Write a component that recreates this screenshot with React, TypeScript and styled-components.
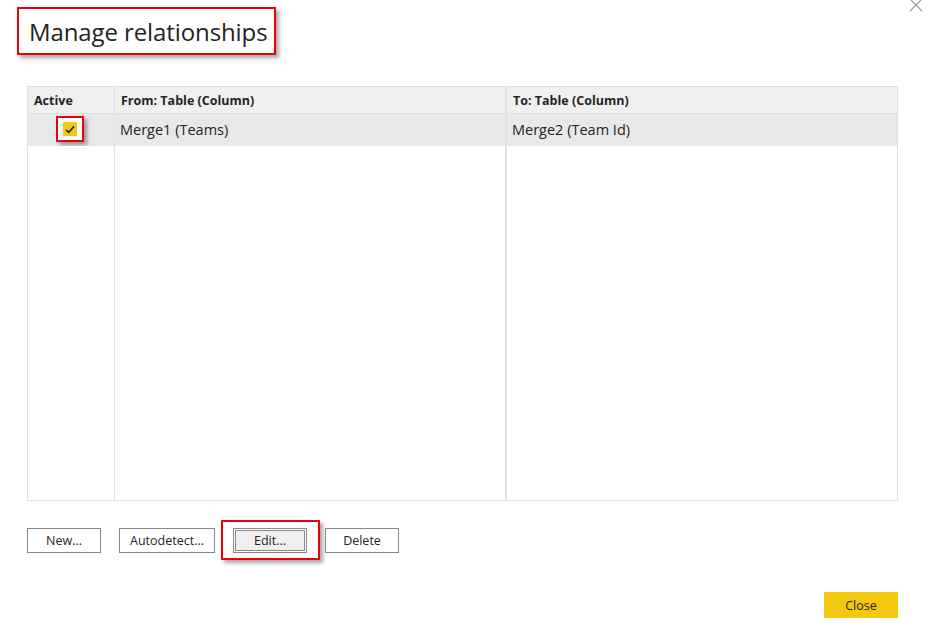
import * as React from "react";
import styled, {createGlobalStyle} from "styled-components";

interface Relationship {
    id: number;
    active: boolean;
    from: string;
    to: string;
}

const relationships: Relationship[] = [
    {id: 1, active: true, from: "Merge1 (Teams)", to: "Merge2 (Team Id)"},
];

const GlobalStyle = createGlobalStyle`
    html, body {
        margin: 0;
        padding: 0;
        background: #ffffff;
    }
    body {
        font-family: "Open Sans", "Noto Sans", "Liberation Sans", sans-serif;
        color: #252423;
    }
`;

const Dialog = styled.div`
    width: 931px;
    height: 636px;
    box-sizing: border-box;
    display: flex;
    flex-direction: column;
    overflow: hidden;
`;

const Header = styled.div`
    display: flex;
    justify-content: space-between;
    align-items: flex-start;
    padding: 7px 6px 0 17px;
`;

const Highlight = styled.div`
    display: inline-flex;
    align-items: center;
    border: 2px solid #e8000b;
    box-shadow: 3px 3px 4px rgba(0, 0, 0, 0.35);
    background: #ffffff;
`;

const TitleBox = styled(Highlight)`
    height: 44px;
    padding: 0 6px 0 10px;
`;

const Title = styled.h1`
    margin: 0;
    font-size: 24px;
    font-weight: 400;
    letter-spacing: -0.1px;
    color: #252423;
`;

const CloseX = styled.button`
    margin-top: -11px;
    width: 18px;
    height: 18px;
    padding: 0;
    border: none;
    background: transparent;
    display: flex;
    align-items: center;
    justify-content: center;
`;

const Table = styled.div`
    margin: 31px 0 0 27px;
    width: 871px;
    height: 415px;
    box-sizing: border-box;
    border: 1px solid #e1e1e1;
    display: grid;
    grid-template-columns: 86px 391px 1fr;
    grid-template-rows: 27px 32px 1fr;
`;

type Divider = "thin" | "double";

const dividerBorder = (d?: Divider) =>
    d === "double" ? "2px solid #e1e1e1" : d === "thin" ? "1px solid #e1e1e1" : "none";

const HeadCell = styled.div<{$divider?: Divider}>`
    background: #f0f0f0;
    border-bottom: 1px solid #e1e1e1;
    border-left: ${(p) => dividerBorder(p.$divider)};
    display: flex;
    align-items: center;
    padding-left: 6px;
    font-size: 12.5px;
    font-weight: 700;
    color: #252423;
`;

const Cell = styled.div<{$divider?: Divider; $selected?: boolean; $center?: boolean}>`
    background: ${(p) => (p.$selected ? "#e8e8e8" : "#ffffff")};
    border-left: ${(p) => dividerBorder(p.$divider)};
    display: flex;
    align-items: center;
    justify-content: ${(p) => (p.$center ? "center" : "flex-start")};
    padding-left: ${(p) => (p.$center ? "0" : "5px")};
    padding-bottom: 2px;
    font-size: 14.5px;
    color: #252423;
`;

const CheckHighlight = styled(Highlight)`
    width: 24px;
    height: 22px;
    justify-content: center;
    margin-right: 2px;
`;

const CheckBox = styled.span`
    width: 14px;
    height: 14px;
    background: #f2c811;
    display: flex;
    align-items: center;
    justify-content: center;
`;

const Actions = styled.div`
    display: flex;
    align-items: center;
    margin: 19px 0 0 27px;
`;

const Button = styled.button<{$pressed?: boolean; $width: number}>`
    width: ${(p) => p.$width}px;
    height: 25px;
    box-sizing: border-box;
    border: 1px solid #8a8886;
    background: ${(p) => (p.$pressed ? "#f0f0f0" : "#ffffff")};
    box-shadow: ${(p) => (p.$pressed ? "inset 0 0 0 1px #ffffff, inset 0 0 0 2px #8a8886" : "none")};
    font-family: inherit;
    font-size: 12.5px;
    color: #252423;
    padding: 0;
`;

const EditHighlight = styled(Highlight)`
    height: 40px;
    box-sizing: border-box;
    padding: 0 11px 0 10px;
    margin: 0 5px 0 6px;
`;

const Footer = styled.div`
    display: flex;
    justify-content: flex-end;
    margin: 32px 33px 0 0;
`;

const PrimaryButton = styled.button`
    width: 74px;
    height: 26px;
    border: none;
    background: #f2c811;
    font-family: inherit;
    font-size: 12.5px;
    color: #252423;
    padding: 0;
`;

const Check = () => (
    <svg width="10" height="9" viewBox="0 0 10 9">
        <path d="M1 4.8 L3.8 7.4 L9 1.4" fill="none" stroke="#2b2b2b" strokeWidth="1.7" />
    </svg>
);

const XIcon = () => (
    <svg width="14" height="14" viewBox="0 0 14 14">
        <path d="M1 1 L13 13 M13 1 L1 13" stroke="#9a9896" strokeWidth="1.1" />
    </svg>
);

const App: React.FC = () => {
    const rows = relationships;
    return (
        <>
            <GlobalStyle />
            <Dialog>
                <Header>
                    <TitleBox>
                        <Title>Manage relationships</Title>
                    </TitleBox>
                    <CloseX aria-label="Close">
                        <XIcon />
                    </CloseX>
                </Header>
                <Table>
                    <HeadCell>Active</HeadCell>
                    <HeadCell $divider="thin">From: Table (Column)</HeadCell>
                    <HeadCell $divider="double">To: Table (Column)</HeadCell>
                    {rows.map((row) => (
                        <React.Fragment key={row.id}>
                            <Cell $selected $center>
                                <CheckHighlight>
                                    <CheckBox>{row.active && <Check />}</CheckBox>
                                </CheckHighlight>
                            </Cell>
                            <Cell $selected $divider="thin">{row.from}</Cell>
                            <Cell $selected $divider="double">{row.to}</Cell>
                        </React.Fragment>
                    ))}
                    <Cell />
                    <Cell $divider="thin" />
                    <Cell $divider="double" />
                </Table>
                <Actions>
                    <Button $width={74}>New...</Button>
                    <Button $width={96} style={{marginLeft: 18}}>Autodetect...</Button>
                    <EditHighlight>
                        <Button $width={74} $pressed>Edit...</Button>
                    </EditHighlight>
                    <Button $width={74}>Delete</Button>
                </Actions>
                <Footer>
                    <PrimaryButton>Close</PrimaryButton>
                </Footer>
            </Dialog>
        </>
    );
};

export default App;
